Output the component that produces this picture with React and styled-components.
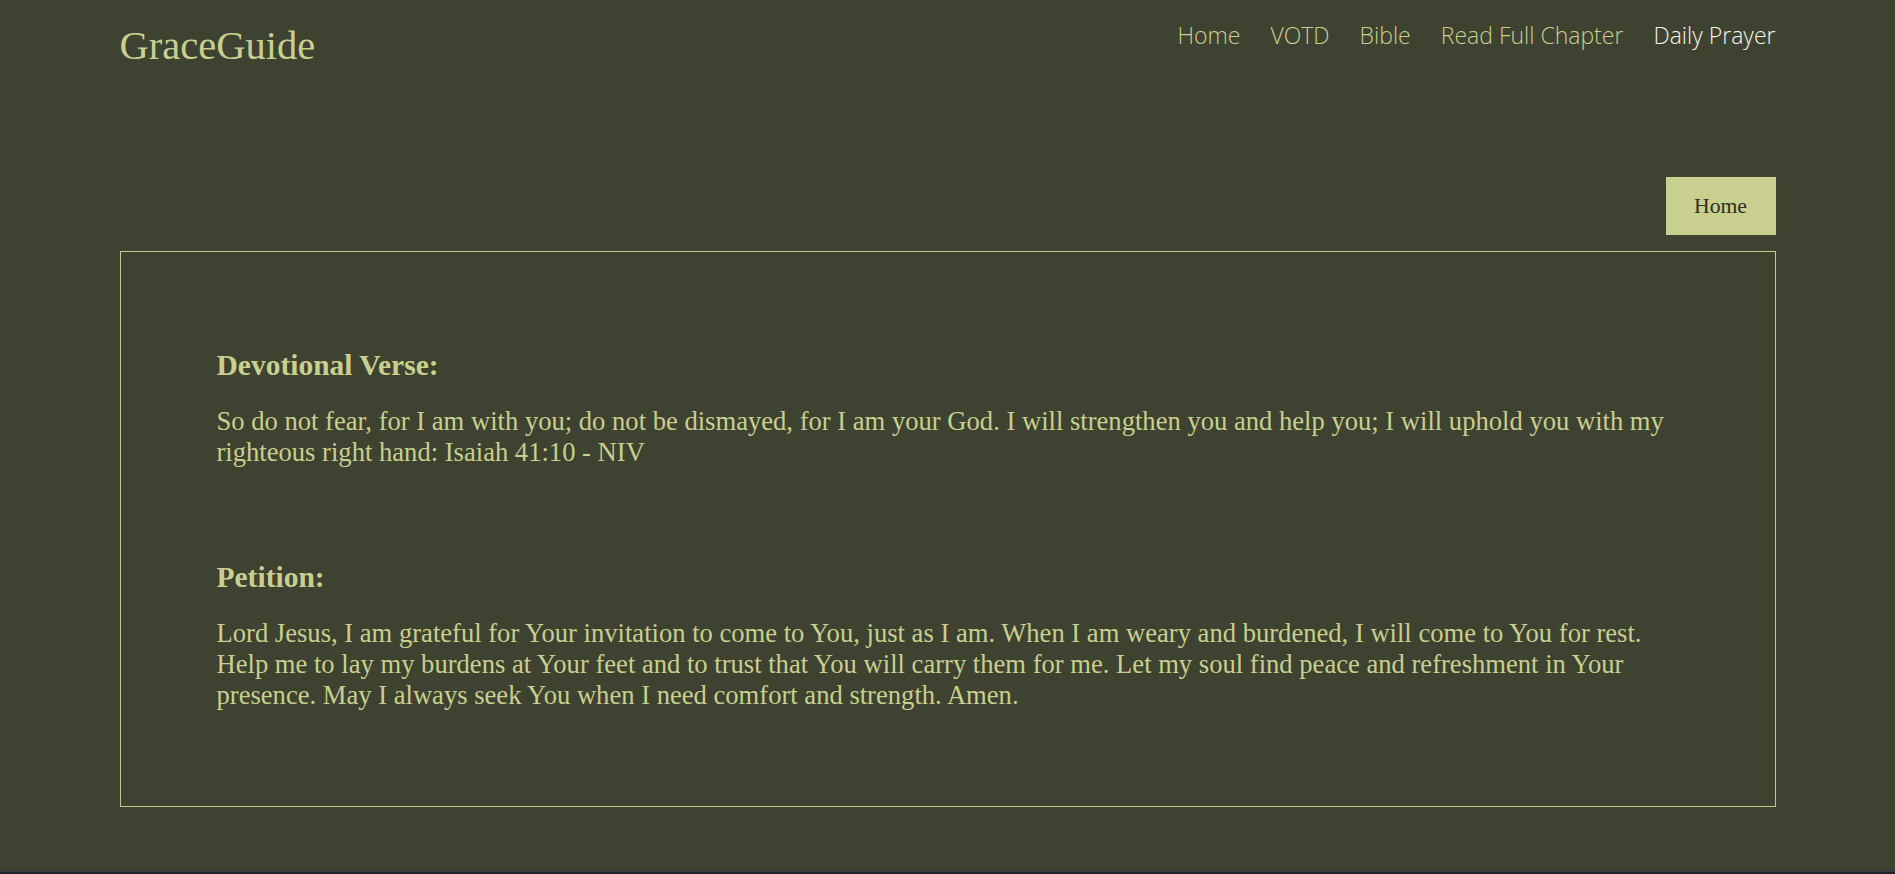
import React from "react";
import styled, { createGlobalStyle } from "styled-components";

const GlobalStyle = createGlobalStyle`
  html, body {
    margin: 0;
    padding: 0;
    background: #3e4230;
  }
  body {
    font-family: "Liberation Serif", "Times New Roman", serif;
    color: #c9cf8f;
  }
  * { box-sizing: border-box; }
`;

const Page = styled.div`
  min-height: 100vh;
  display: flex;
  flex-direction: column;
`;

const Container = styled.div`
  width: 1656px;
  margin: 0 auto;
`;

const Header = styled.header`
  display: flex;
  justify-content: space-between;
  align-items: flex-start;
  padding-top: 19px;
`;

const Logo = styled.a`
  font-family: "Liberation Serif", "Times New Roman", serif;
  font-size: 40.5px;
  line-height: 46px;
  margin-top: 4px;
  color: #c9cf8f;
  text-decoration: none;
`;

const Nav = styled.nav`
  display: flex;
  gap: 30px;
`;

const NavLink = styled.a`
  font-family: "Open Sans", sans-serif;
  font-weight: 300;
  font-size: 23px;
  line-height: 32px;
  color: ${(p) => (p.$active ? "#f4f4ee" : "#c9cf8f")};
  text-decoration: none;
`;

const Toolbar = styled.div`
  display: flex;
  justify-content: flex-end;
  margin-top: 108px;
  margin-bottom: 16px;
`;

const HomeButton = styled.button`
  width: 110px;
  height: 58px;
  border: none;
  background: #c9cf8f;
  color: #2c2e1f;
  font-family: "Liberation Serif", "Times New Roman", serif;
  font-size: 21.7px;
  display: flex;
  align-items: center;
  justify-content: center;
  padding: 0;
  cursor: pointer;
`;

const Card = styled.main`
  border: 1px solid #c5cb86;
  padding: 96px 96px 95px 96px;
  display: flex;
  flex-direction: column;
  gap: 92px;
`;

const Section = styled.section`
  display: flex;
  flex-direction: column;
  gap: 24px;
`;

const Heading = styled.h3`
  margin: 0;
  font-family: "Liberation Serif", "Times New Roman", serif;
  font-size: 29.5px;
  font-weight: 700;
  line-height: 34px;
  color: #c9cf8f;
`;

const Text = styled.p`
  margin: 0;
  font-family: "Liberation Serif", "Times New Roman", serif;
  font-size: 26.6px;
  line-height: 31px;
  color: #c9cf8f;
`;

const Footer = styled.footer`
  margin-top: 63px;
  border-top: 2px solid #3a3a45;
  background: #202128;
  height: 60px;
`;

const links = ["Home", "VOTD", "Bible", "Read Full Chapter", "Daily Prayer"];

export default function App() {
  return (
    <Page>
      <GlobalStyle />
      <Container>
        <Header>
          <Logo href="#">GraceGuide</Logo>
          <Nav>
            {links.map((l) => (
              <NavLink key={l} href="#" $active={l === "Daily Prayer"}>
                {l}
              </NavLink>
            ))}
          </Nav>
        </Header>
        <Toolbar>
          <HomeButton>Home</HomeButton>
        </Toolbar>
        <Card>
          <Section>
            <Heading>Devotional Verse:</Heading>
            <Text>
              So do not fear, for I am with you; do not be dismayed, for I am your God. I will
              strengthen you and help you; I will uphold you with my righteous right hand: Isaiah
              41:10 - NIV
            </Text>
          </Section>
          <Section>
            <Heading>Petition:</Heading>
            <Text>
              Lord Jesus, I am grateful for Your invitation to come to You, just as I am. When I am
              weary and burdened, I will come to You for rest. Help me to lay my burdens at Your
              feet and to trust that You will carry them for me. Let my soul find peace and
              refreshment in Your presence. May I always seek You when I need comfort and
              strength. Amen.
            </Text>
          </Section>
        </Card>
      </Container>
      <Footer />
    </Page>
  );
}
